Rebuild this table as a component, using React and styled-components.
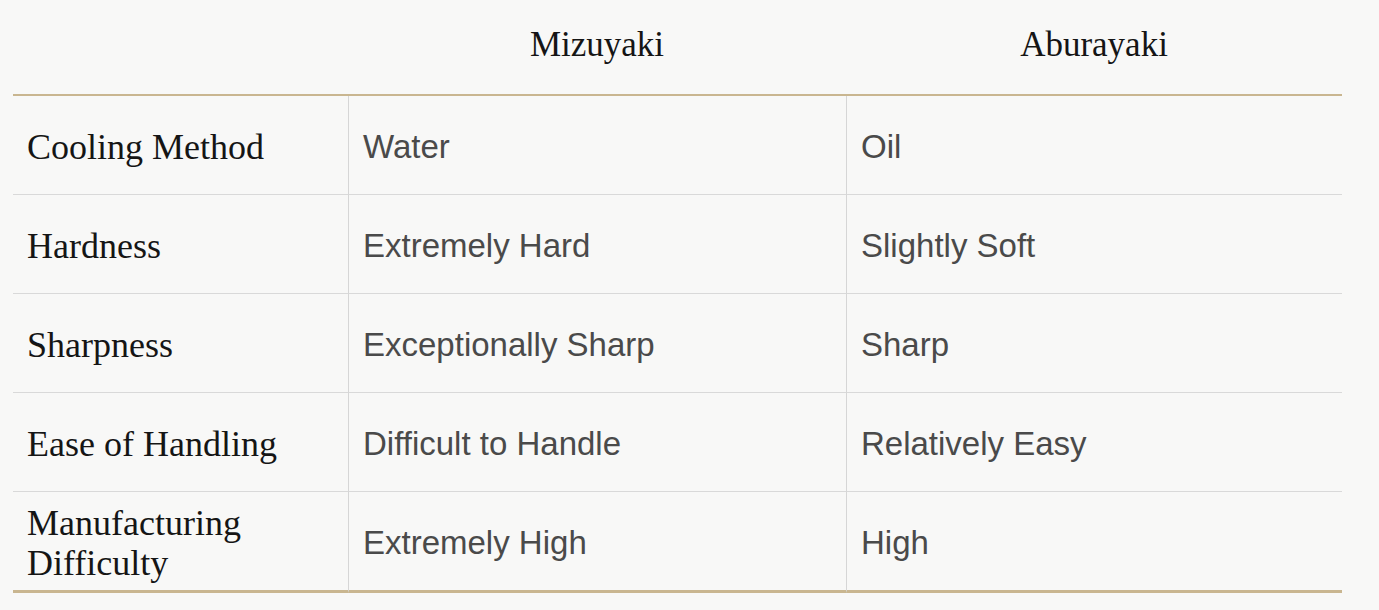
import React from 'react'
import styled, { createGlobalStyle } from 'styled-components'

const GlobalStyle = createGlobalStyle`
  html, body {
    margin: 0;
    padding: 0;
    background: #f8f8f7;
  }
`

const Page = styled.div`
  width: 1379px;
  height: 610px;
  padding: 0 37px 0 13px;
  box-sizing: border-box;
  background: #f8f8f7;
  overflow: hidden;
`

const Table = styled.div`
  display: grid;
  grid-template-columns: 335px 498px 1fr;
`

const HeadCell = styled.div`
  height: 96px;
  display: flex;
  align-items: center;
  justify-content: center;
  border-bottom: 2px solid #c9b690;
  font-family: 'Liberation Serif', 'Times New Roman', serif;
  font-size: 35px;
  color: #151515;
  padding-bottom: 4px;
  box-sizing: border-box;
`

const Cell = styled.div`
  height: ${p => (p.last ? '101px' : '99px')};
  box-sizing: border-box;
  display: flex;
  align-items: center;
  padding: 3px 0 0 14px;
  border-bottom: ${p => (p.last ? '3px solid #c9b690' : '1px solid #d9d9d9')};
  border-left: ${p => (p.first ? 'none' : '1px solid #d6d6d6')};
`

const Label = styled.span`
  font-family: 'Liberation Serif', 'Times New Roman', serif;
  font-size: 36px;
  line-height: 40px;
  color: #151515;
`

const Value = styled.span`
  font-family: 'Liberation Sans', Arial, sans-serif;
  font-size: 33px;
  color: #4a4a4a;
`

const rows = [
  ['Cooling Method', 'Water', 'Oil'],
  ['Hardness', 'Extremely Hard', 'Slightly Soft'],
  ['Sharpness', 'Exceptionally Sharp', 'Sharp'],
  ['Ease of Handling', 'Difficult to Handle', 'Relatively Easy'],
  [['Manufacturing', 'Difficulty'], 'Extremely High', 'High']
]

export default function App() {
  return (
    <Page>
      <GlobalStyle />
      <Table>
        <HeadCell />
        <HeadCell>Mizuyaki</HeadCell>
        <HeadCell>Aburayaki</HeadCell>
        {rows.map((row, i) => {
          const last = i === rows.length - 1
          return (
            <React.Fragment key={i}>
              <Cell first last={last}>
                <Label>
                  {Array.isArray(row[0])
                    ? row[0].map((line, j) => (
                        <React.Fragment key={j}>
                          {j > 0 && <br />}
                          {line}
                        </React.Fragment>
                      ))
                    : row[0]}
                </Label>
              </Cell>
              <Cell last={last}>
                <Value>{row[1]}</Value>
              </Cell>
              <Cell last={last}>
                <Value>{row[2]}</Value>
              </Cell>
            </React.Fragment>
          )
        })}
      </Table>
    </Page>
  )
}
